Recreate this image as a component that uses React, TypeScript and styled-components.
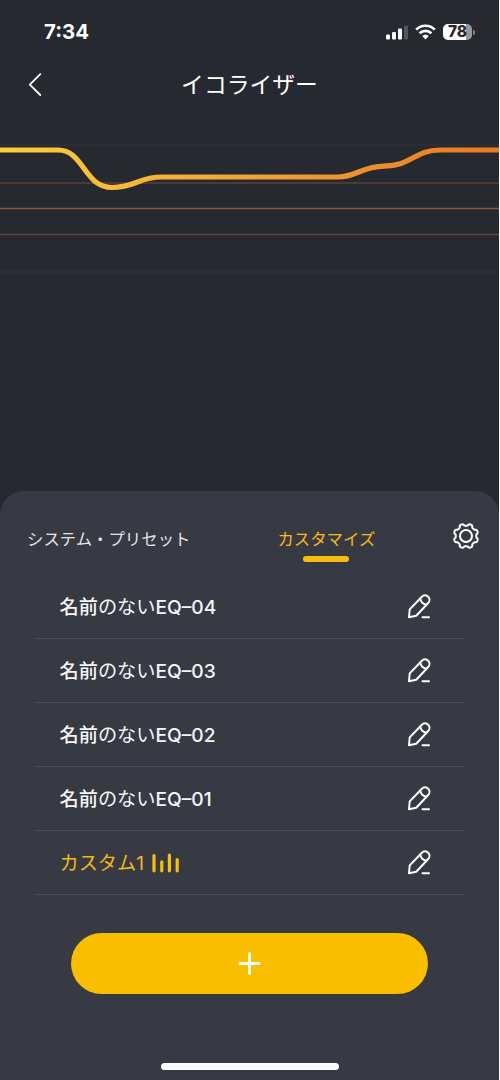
import React from "react";
import styled, { createGlobalStyle } from "styled-components";

const GlobalStyle = createGlobalStyle`
  * { box-sizing: border-box; }
  body { margin: 0; background: #fff; }
  button { border: 0; padding: 0; margin: 0; background: none; font: inherit; color: inherit; }
  svg { display: block; flex: none; }
`;

const Screen = styled.div`
  width: 499px;
  height: 1080px;
  display: flex;
  flex-direction: column;
  overflow: hidden;
  background: #262930;
  color: #fff;
  font-family: Inter, "Noto Sans CJK JP", sans-serif;
`;

const StatusBar = styled.div`
  height: 58px;
  flex: none;
  display: flex;
  align-items: center;
  justify-content: space-between;
  padding: 6px 24px 0 44px;
`;

const Time = styled.span`
  font-size: 20.4px;
  line-height: 24px;
  font-weight: 700;
`;

const StatusIcons = styled.div`
  display: flex;
  align-items: center;
  gap: 7px;
`;

const Battery = styled.div`
  display: flex;
  align-items: center;
  gap: 1px;
`;

const BatteryBody = styled.div`
  width: 29px;
  height: 16px;
  border-radius: 5px;
  background: linear-gradient(90deg, #fff 23px, #96989c 23px);
  color: #262930;
  font-size: 15.5px;
  line-height: 16px;
  font-weight: 800;
  text-align: center;
`;

const BatteryCap = styled.div`
  width: 2px;
  height: 5px;
  border-radius: 0 2px 2px 0;
  background: #85878c;
`;

const Header = styled.header`
  height: 52px;
  flex: none;
  display: grid;
  grid-template-columns: 60px 1fr 60px;
  align-items: center;
`;

const BackButton = styled.button`
  padding-left: 28px;
  height: 52px;
`;

const Title = styled.h1`
  margin: 0;
  padding-top: 2px;
  font-size: 22.8px;
  line-height: 34px;
  font-weight: 400;
  text-align: center;
`;

const Graph = styled.div`
  height: 381px;
  flex: none;
`;

const Sheet = styled.section`
  flex: 1;
  display: flex;
  flex-direction: column;
  align-items: center;
  border-radius: 24px 24px 0 0;
  background: #373943;
`;

const Tabs = styled.div`
  width: 100%;
  height: 84px;
  flex: none;
  display: flex;
  align-items: flex-start;
  padding: 31px 19px 0 27px;
`;

const Tab = styled.button<{ $active?: boolean }>`
  display: flex;
  flex-direction: column;
  align-items: center;
  gap: 2px;
  padding-top: 2px;
  margin-left: ${(p) => (p.$active ? "87px" : "0")};
  color: ${(p) => (p.$active ? "#f7b916" : "#e4e5e8")};
  font-size: 16.4px;
  line-height: 30px;
  white-space: nowrap;
  font-weight: 400;
`;

const Underline = styled.span`
  width: 46px;
  height: 5.5px;
  border-radius: 3px;
  background: #f9bc12;
`;

const SettingsButton = styled.button`
  margin-left: auto;
`;

const List = styled.ul`
  width: 430px;
  margin: 0;
  padding: 0;
  list-style: none;
`;

const Row = styled.li<{ $active?: boolean }>`
  height: 64px;
  display: flex;
  align-items: center;
  justify-content: space-between;
  padding: 0 33px 0 25px;
  border-bottom: 1px solid #4b4d57;
  color: ${(p) => (p.$active ? "#f4b81b" : "#f6f6f8")};
  font-size: 19.2px;
  line-height: 30px;
  font-weight: ${(p) => (p.$active ? 400 : 500)};
`;

const RowName = styled.span`
  display: flex;
  align-items: center;
  gap: 8px;
`;

const PresetName = styled.span`
  white-space: nowrap;
`;

const Kana = styled.span`
  font-weight: 400;
`;

const AddButton = styled.button`
  width: 357px;
  height: 61px;
  margin-top: 38px;
  border-radius: 31px;
  background: #f9be00;
  display: flex;
  align-items: center;
  justify-content: center;
`;

const HomeIndicator = styled.div`
  width: 178px;
  height: 7px;
  margin: auto 0 10px;
  border-radius: 4px;
  background: #fff;
`;

const SignalIcon = () => (
  <svg width="22" height="15" viewBox="0 0 22 15">
    <rect x="0" y="9.5" width="4" height="5" rx="1.2" fill="#fff" />
    <rect x="6" y="7" width="4" height="7.5" rx="1.2" fill="#fff" />
    <rect x="12" y="3.6" width="4" height="10.9" rx="1.2" fill="#fff" />
    <rect x="18" y="0.4" width="4" height="14.1" rx="1.2" fill="#54575d" />
  </svg>
);

const WifiIcon = () => (
  <svg width="21" height="16" viewBox="0 0 21 16" fill="none" stroke="#fff" strokeWidth="2.7">
    <path d="M1.2 5.6a13.2 13.2 0 0 1 18.6 0" />
    <path d="M4.6 9.2a8.4 8.4 0 0 1 11.8 0" />
    <path d="M10.5 15.4 7.2 12.1a4.8 4.8 0 0 1 6.6 0Z" fill="#fff" stroke="none" />
  </svg>
);

const BackIcon = () => (
  <svg width="14" height="24" viewBox="0 0 14 24" fill="none" stroke="#fff" strokeWidth="1.8">
    <path d="M12.3 2.2 1.8 12.7 12.3 23" strokeLinecap="round" strokeLinejoin="round" />
  </svg>
);

const gearPath = (() => {
  const steps = 160;
  let d = "";
  for (let i = 0; i < steps; i++) {
    const a = (i / steps) * Math.PI * 2;
    const wave = Math.tanh(-2.2 * Math.cos(a * 8));
    const r = 11.3 + 1.05 * wave;
    d += `${i ? "L" : "M"}${(14 + r * Math.sin(a)).toFixed(2)} ${(14 - r * Math.cos(a)).toFixed(2)}`;
  }
  return d + "Z";
})();

const GearIcon = () => (
  <svg width="28" height="28" viewBox="0 0 28 28" fill="none" stroke="#fff" strokeWidth="2">
    <path d={gearPath} strokeLinejoin="round" />
    <circle cx="14" cy="14" r="6" />
  </svg>
);

const PencilIcon = () => (
  <svg width="26" height="28" viewBox="0 0 26 28" fill="none" stroke="#fff" strokeWidth="2" strokeLinecap="round" strokeLinejoin="round">
    <path d="M3 24.3 3.7 16.4 15.9 3.7a4.3 4.3 0 0 1 6.3 0 4.5 4.5 0 0 1 0 6.3L10.2 22.8Z" />
    <path d="M14.2 5.6c.6 3.2 2.6 5.3 5.9 6.1" />
    <path d="M16.6 24.3h6.4" strokeWidth="2.1" />
  </svg>
);

const BarsIcon = () => (
  <svg width="28" height="20" viewBox="0 0 28 20" stroke="#f9bc12" strokeWidth="3.2" strokeLinecap="round">
    <path d="M2 2.6v15.2M9.8 8.8v9M17.4 2v15.8M25.2 6.6v11.2" />
  </svg>
);

const PlusIcon = () => (
  <svg width="23" height="23" viewBox="0 0 23 23" stroke="#fff" strokeWidth="3" strokeLinecap="round">
    <path d="M11.5 1.8v19.4M1.8 11.5h19.4" />
  </svg>
);

const gridLines = [
  { y: 35, color: "#352f32" },
  { y: 73, color: "#5b4038" },
  { y: 98.5, color: "#8b5633" },
  { y: 124.5, color: "#63453c" },
  { y: 162, color: "#342f33" },
];

const Curve = () => (
  <svg width="499" height="200" viewBox="0 0 499 200" fill="none">
    <defs>
      <linearGradient id="curve" gradientUnits="userSpaceOnUse" x1="0" y1="0" x2="499" y2="0">
        <stop offset="0" stopColor="#fbce3e" />
        <stop offset="0.5" stopColor="#f0a334" />
        <stop offset="1" stopColor="#e87a20" />
      </linearGradient>
    </defs>
    {gridLines.map((l) => (
      <path key={l.y} d={`M0 ${l.y}H499`} stroke={l.color} strokeWidth="1.5" />
    ))}
    <path
      d="M0 40H58C84 40 84 77.5 112 77.5C136 77.5 138 67 162 67H338C356 67 362 56.4 384 56.1C412 56 414 40 440 40H499"
      stroke="url(#curve)"
      strokeWidth="5.2"
    />
  </svg>
);

const presetNumbers = ["04", "03", "02", "01"];

export default function App() {
  return (
    <Screen>
      <GlobalStyle />
      <StatusBar>
        <Time>7:34</Time>
        <StatusIcons>
          <SignalIcon />
          <WifiIcon />
          <Battery>
            <BatteryBody>78</BatteryBody>
            <BatteryCap />
          </Battery>
        </StatusIcons>
      </StatusBar>
      <Header>
        <BackButton aria-label="戻る">
          <BackIcon />
        </BackButton>
        <Title>イコライザー</Title>
      </Header>
      <Graph>
        <Curve />
      </Graph>
      <Sheet>
        <Tabs>
          <Tab>システム・プリセット</Tab>
          <Tab $active>
            カスタマイズ
            <Underline />
          </Tab>
          <SettingsButton aria-label="設定">
            <GearIcon />
          </SettingsButton>
        </Tabs>
        <List>
          {presetNumbers.map((n) => (
            <Row key={n}>
              <PresetName>
                名前<Kana>のない</Kana>EQ–{n}
              </PresetName>
              <PencilIcon />
            </Row>
          ))}
          <Row $active>
            <RowName>
              カスタム1
              <BarsIcon />
            </RowName>
            <PencilIcon />
          </Row>
        </List>
        <AddButton aria-label="追加">
          <PlusIcon />
        </AddButton>
        <HomeIndicator />
      </Sheet>
    </Screen>
  );
}
